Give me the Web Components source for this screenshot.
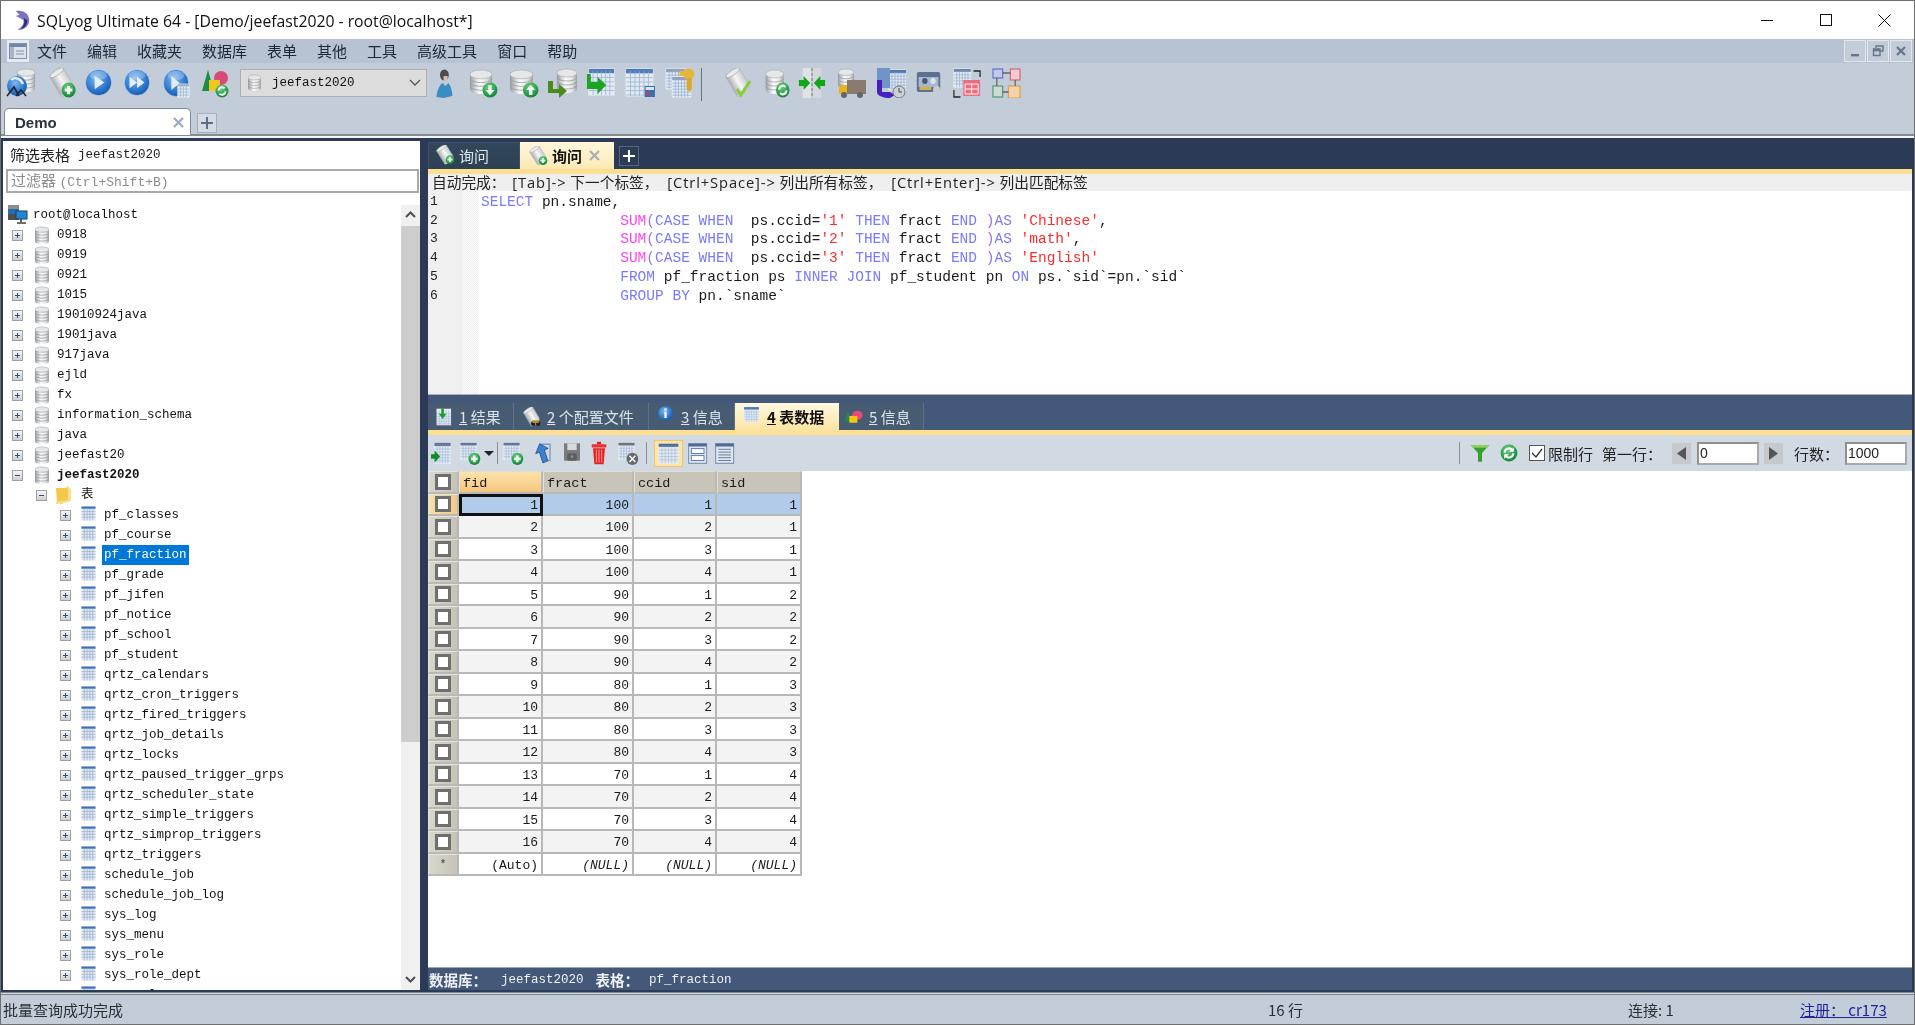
<!DOCTYPE html>
<html><head><meta charset="utf-8"><title>SQLyog</title>
<style>
html,body{margin:0;padding:0;overflow:hidden;background:#fff}
body{font-family:"Noto Sans CJK SC","Liberation Sans",sans-serif;font-size:14px;color:#222}
</style></head>
<body>
<sq-app></sq-app>
<script>
const MONO='"Liberation Mono","Noto Sans CJK SC",monospace';
const CJK='"Noto Sans CJK SC","Liberation Sans",sans-serif';
const DEFS=`<defs>
<linearGradient id="gy" x2="1" y2="0"><stop offset="0" stop-color="#9a9ea3"/><stop offset=".42" stop-color="#fbfbfb"/><stop offset=".75" stop-color="#e4e5e6"/><stop offset="1" stop-color="#a2a5aa"/></linearGradient>
<radialGradient id="bl" cx=".42" cy=".35" r=".72"><stop offset="0" stop-color="#7fb8ee"/><stop offset=".6" stop-color="#2f7ad0"/><stop offset="1" stop-color="#124f9f"/></radialGradient>
<radialGradient id="gn" cx=".42" cy=".3" r=".8"><stop offset="0" stop-color="#6fcf86"/><stop offset=".6" stop-color="#27a04a"/><stop offset="1" stop-color="#12743a"/></radialGradient>
<linearGradient id="pp" x2="1" y2="0"><stop offset="0" stop-color="#a9abad"/><stop offset=".5" stop-color="#f7f7f7"/><stop offset="1" stop-color="#c9cacc"/></linearGradient>
</defs>`;
function cyl(x,y,w,h){const ry=w*.2;let s=`<path d="M${x} ${y+ry}V${y+h-ry}A${w/2} ${ry} 0 0 0 ${x+w} ${y+h-ry}V${y+ry}Z" fill="url(#gy)"/><ellipse cx="${x+w/2}" cy="${y+ry}" rx="${w/2}" ry="${ry}" fill="#e6e7e8" stroke="#a2a5a9" stroke-width=".6"/>`;
 for(let i=1;i<4;i++){const yy=y+ry+(h-2*ry)*i/4;s+=`<path d="M${x} ${yy}A${w/2} ${ry} 0 0 0 ${x+w} ${yy}" fill="none" stroke="#8f9296" stroke-width=".7"/>`}return s}
function tbl(x,y,w,h,c='#4f7dba'){let s=`<rect x="${x}" y="${y}" width="${w}" height="${h}" fill="#e2e9f3" stroke="#eef2f6" stroke-width=".8"/><rect x="${x}" y="${y}" width="${w}" height="${Math.max(2.4,h*.16)}" fill="${c}"/>`;
 const st=Math.max(3,w/6);for(let a=x+st;a<x+w-1;a+=st)s+=`<path d="M${a} ${y+2}V${y+h}" stroke="#94add0" stroke-width=".7"/>`;for(let b=y+h*.16+st;b<y+h-1;b+=st)s+=`<path d="M${x} ${b}H${x+w}" stroke="#94add0" stroke-width=".7"/>`;return s}
function bad(cx,cy,r,t){let g='';const w='#f4fbf5';
 if(t=='+')g=`<path d="M${cx-r*.55} ${cy}H${cx+r*.55}M${cx} ${cy-r*.55}V${cy+r*.55}" stroke="${w}" stroke-width="${r*.42}"/>`;
 if(t=='d')g=`<path d="M${cx} ${cy+r*.7}L${cx-r*.6} ${cy}H${cx-r*.22}V${cy-r*.65}H${cx+r*.22}V${cy}H${cx+r*.6}Z" fill="${w}"/>`;
 if(t=='u')g=`<path d="M${cx} ${cy-r*.7}L${cx-r*.6} ${cy}H${cx-r*.22}V${cy+r*.65}H${cx+r*.22}V${cy}H${cx+r*.6}Z" fill="${w}"/>`;
 if(t=='r')g=`<path d="M${cx-r*.55} ${cy-r*.05}A${r*.55} ${r*.55} 0 0 1 ${cx+r*.4} ${cy-r*.4}M${cx+r*.55} ${cy+r*.05}A${r*.55} ${r*.55} 0 0 1 ${cx-r*.4} ${cy+r*.4}" stroke="${w}" stroke-width="${r*.3}" fill="none"/>`;
 return `<circle cx="${cx}" cy="${cy}" r="${r}" fill="url(#gn)"/>`+g}
function scroll(){return `<g transform="rotate(-32 14 13)"><path d="M5 3H22V20C22 24 20 26 17 26H5Z" fill="url(#pp)" stroke="#b0b2b5" stroke-width=".6"/><ellipse cx="13.5" cy="3" rx="8.5" ry="2.6" fill="#eaeaea" stroke="#9ea1a5" stroke-width=".7"/><ellipse cx="10.5" cy="25.5" rx="5.5" ry="2" fill="#c4c6c8"/></g>`}
function circ(g){return `<circle cx="15" cy="15" r="13.5" fill="url(#bl)" stroke="#dbe5f0" stroke-width=".6"/><ellipse cx="15" cy="7.5" rx="9" ry="4.6" fill="#fff" opacity=".26"/>`+g}
const ICONS={
 connect:`${cyl(11,1,18,23)}<circle cx="11" cy="18" r="10" fill="url(#bl)"/><path d="M5 12C9 8 15 11 17 16" stroke="#e8eef6" stroke-width="2.4" fill="none"/><path d="M1 28L8 19L13 28M10 28L15 22L20 28" fill="none" stroke="#20242c" stroke-width="1.6"/>`,
 qadd:`${scroll()}${bad(21,22,7.5,'+')}`,
 play:circ(`<path d="M11 8L21 15L11 22Z" fill="#e5edf6"/>`),
 ffwd:circ(`<path d="M7 9L15 15L7 21ZM15 9L23 15L15 21Z" fill="#e5edf6"/>`),
 playdoc:circ(`<path d="M10 8L19 15L10 22Z" fill="#e5edf6"/>`)+tbl(17,16,12,13,'#a6b5ca'),
 shapes:`<path d="M8 2L14 23H2Z" fill="#1d8f44"/><circle cx="21" cy="10" r="7" fill="#d94a78"/><rect x="9" y="12" width="11" height="11" fill="#f2c81e"/>${bad(22,23,6.5,'r')}`,
 user:`<circle cx="13" cy="7" r="5.5" fill="#4a4b4e"/><path d="M12 8h5v5h-5z" fill="#d8c0ae"/><path d="M3 29C4 21 8 16 11 15L14 18L18 15C21 18 23 23 23 28L12 30Z" fill="#3a8dc0"/>`,
 dbdown:`${cyl(2,2,22,24)}${bad(22,22,7.5,'d')}`,
 dbup:`${cyl(2,2,22,24)}${bad(22,22,7.5,'u')}`,
 dbarrow:`${cyl(10,1,20,24)}<path d="M1 13H6V21H12V16L20 23L12 30V25H1Z" fill="#4a8a1e"/>`,
 tblarrow:`${tbl(3,1,26,26)}<path d="M1 6H5V14H12V9L21 17L12 26V21H1Z" fill="#1aa522"/>`,
 tbldb:`${tbl(1,1,26,27)}<rect x="19" y="18" width="10" height="11" fill="#3f6eaf"/><rect x="20" y="19" width="8" height="3" fill="#dbe5f3"/><rect x="20" y="24" width="3" height="3" fill="#d04040"/>`,
 tblkey:`${tbl(1,1,18,20,'#90a2be')}${tbl(7,9,18,20,'#90a2be')}<circle cx="23" cy="6" r="5.5" fill="#e6b63c"/><rect x="14" y="3" width="6" height="5" fill="#e6b63c"/><path d="M21 10h5v11l-2 3-3-3z" fill="#dca72a"/>`,
 qcheck:`${scroll()}<path d="M13 21L17 27L27 13" fill="none" stroke="#88cc3c" stroke-width="3.2"/>`,
 dbref:`${cyl(3,2,20,24)}${bad(22,22,7.5,'r')}`,
 compare:`<rect x="5" y="0" width="9" height="30" fill="#dfe3e8"/><rect x="16" y="0" width="9" height="30" fill="#d4d8dd"/><path d="M15 0V30" stroke="#777" stroke-dasharray="3 2"/><path d="M1 12H6V8L13 15L6 22V18H1ZM29 12H24V8L17 15L24 22V18H29Z" fill="#11a518"/>`,
 truck:`${cyl(2,1,16,20)}<rect x="11" y="12" width="20" height="14" fill="#8a7a6e"/><path d="M3 17H11V26H3Z" fill="#e6b21e"/><circle cx="8" cy="27" r="3" fill="#666"/><circle cx="24" cy="27" r="3" fill="#666"/>`,
 sched:`${tbl(13,2,17,20,'#5478b0')}<rect x="1" y="0" width="13" height="20" fill="#7094c8"/><path d="M1 12V24C1 28 8 30 14 30L19 27L14 24H6V12Z" fill="#4820c0"/><circle cx="23" cy="24" r="6" fill="#ccd0d4" stroke="#777"/><path d="M23 20V24H26" stroke="#444" fill="none"/>`,
 idcard:`<rect x="2" y="4" width="26" height="20" rx="2" fill="#5d7090"/><rect x="4" y="9" width="22" height="10" fill="#a4b8d2"/><circle cx="11" cy="13" r="3" fill="#45566e"/><circle cx="20" cy="13" r="3" fill="#dfe3e9"/><rect x="5" y="19" width="13" height="3" fill="#dcb040"/><circle cx="24" cy="22" r="4" fill="#c8ccd2"/>`,
 tblcopy:`${tbl(1,1,18,18,'#6f88aa')}<rect x="11" y="12" width="18" height="16" fill="#f26a7e"/><path d="M13 16H27V26H13ZM20 16V26M13 21H27" stroke="#fff" fill="none"/><path d="M22 3H29V9M1 22V29H8" stroke="#222" stroke-width="1.3" fill="none"/>`,
 schema:`<g fill="none" stroke-width="1.3"><rect x="1" y="1" width="10" height="9" stroke="#6c74c8" fill="#c0c8ec"/><rect x="19" y="1" width="10" height="11" stroke="#d0707c" fill="#f3c9cd"/><rect x="1" y="18" width="10" height="11" stroke="#5c9c7c" fill="#c8dcd2"/><rect x="17" y="18" width="12" height="12" stroke="#e0a050" fill="#f3d4a8"/><path d="M11 5H19M5 10V18M24 12V18M11 24H17" stroke="#666"/></g>`,
 db:`${cyl(3,1,14,18)}`,
 folder:`<path d="M1 3H11L13 1V15L7 19H2Z" fill="#f2c94b"/><path d="M1 3V17H2L13 15V2L16 4V16L5 19H1Z" fill="#f9df8c"/>`,
 table:`${tbl(.5,.5,15,15,'#3f72b8')}`,
 server:`<rect x="1" y="0" width="11" height="4" fill="#8a8f96"/><rect x="1" y="4" width="11" height="5" fill="#2a6cb0"/><rect x="1" y="9" width="11" height="6" fill="#4d5156"/><rect x="9" y="6" width="11" height="8" fill="#1e88d8" stroke="#2a3c55"/><path d="M14 14v3M10 18H19" stroke="#3b4048" stroke-width="1.6"/>`,
 dolphin:`<path d="M3 1C9 0 16 2 17 9C18 15 13 20 5 20C9 17 12 14 11 10C8 9 6 7 3 6C5 5 6 5 7 5Z" fill="#7a74c0"/><path d="M11 8C13 11 12 16 8 19C13 18 15 14 15 10Z" fill="#2c2a7c"/>`,
 qplain:`${scroll()}${bad(21,22,6.5,'+')}`,
 result:`${tbl(3,3,22,24,'#e6edf5')}<path d="M14 2V10H18L12 18L6 10H10V2Z" fill="#18a02c"/>`,
 profile:`${scroll()}<circle cx="16" cy="25" r="3.5" fill="#222"/><circle cx="24" cy="25" r="3.5" fill="#222"/><rect x="15" y="20" width="10" height="4" fill="#b58a2c"/>`,
 info:`<circle cx="15" cy="15" r="13" fill="url(#bl)"/><rect x="13" y="6" width="4" height="4" fill="#fff"/><rect x="13" y="12" width="4" height="11" fill="#fff"/>`,
 tabledata:`${tbl(2,2,26,26,'#3f72b8')}`,
 shapes2:`<path d="M6 6L12 24H1Z" fill="#1d8f44"/><circle cx="20" cy="13" r="8" fill="#e8497a"/><rect x="8" y="14" width="12" height="12" fill="#f7c612"/>`,
 rowimport:`${tbl(5,1,23,27,'#5f7496')}<path d="M0 16H5V11L13 19L5 27V22H0Z" fill="#0c8e24"/>`,
 rowadd:`${tbl(2,1,22,22,'#5f7496')}${bad(21,22,8,'+')}`,
 undo:`<path d="M11 3H27V24H18" fill="none" stroke="#7e9ac2" stroke-width="2"/><path d="M16 2L6 12H12V27H20V12H26Z" transform="rotate(-20 15 15)" fill="#3e7fd0" stroke="#1c4f95"/>`,
 save:`<path d="M3 2H27V28H3Z" fill="#7a7c7f"/><rect x="8" y="2" width="14" height="10" fill="#d8d8d8"/><rect x="8" y="17" width="14" height="11" fill="#5c5e61"/><circle cx="15" cy="22" r="2" fill="#8a8c8f"/>`,
 trash:`<rect x="12" y="1" width="6" height="3" fill="#d22"/><rect x="4" y="4" width="22" height="4" rx="1" fill="#ee3030"/><path d="M6 9H24L22 29H8Z" fill="#e42525"/><path d="M11 11V27M15 11V27M19 11V27" stroke="#ff9a9a" stroke-width="1.4"/>`,
 rowdel:`${tbl(2,1,22,22,'#6d7178')}<circle cx="21" cy="22" r="8" fill="#66696e"/><path d="M17 18L25 26M25 18L17 26" stroke="#fff" stroke-width="2"/>`,
 viewgrid:`${tbl(1,1,28,28,'#4e6a94')}`,
 viewform:`<rect x="1" y="1" width="27" height="28" fill="#dfe6ef" stroke="#6c86ab" stroke-width="1.4"/><rect x="1" y="1" width="27" height="4" fill="#4e6a94"/><rect x="5" y="8" width="19" height="7" fill="#fff" stroke="#5c7aa5" stroke-width="1.4"/><rect x="5" y="18" width="19" height="7" fill="#fff" stroke="#5c7aa5" stroke-width="1.4"/>`,
 viewtext:`<rect x="1" y="1" width="27" height="28" fill="#dfe6ef" stroke="#6c86ab" stroke-width="1.4"/><rect x="1" y="1" width="27" height="4" fill="#4e6a94"/><path d="M5 9H24M5 13H24M5 17H24M5 21H24M5 25H24" stroke="#5c6f8c" stroke-width="1.3"/>`,
 funnel:`<path d="M1 3H29L18 15V28H12V15Z" fill="#36a02c"/><path d="M1 3H29L26 7H4Z" fill="#8bd05a"/>`,
 refresh:`<circle cx="15" cy="15" r="14" fill="url(#gn)"/><path d="M6 14A9 9 0 0 1 21 8L23 5V13H15L18 10A6 6 0 0 0 9 15ZM24 16A9 9 0 0 1 9 22L7 25V17H15L12 20A6 6 0 0 0 21 15Z" fill="#fff"/>`
};
const VB={db:'3 0 14 20',folder:'0 0 17 20',table:'0 0 16 16',server:'0 0 21 20',dolphin:'0 0 19 21'};
class SqIcon extends HTMLElement{
 constructor(){super();this.attachShadow({mode:'open'})}
 connectedCallback(){const n=this.getAttribute('name'),w=this.getAttribute('w')||30,h=this.getAttribute('h')||w;
  this.shadowRoot.innerHTML=`<style>:host{display:inline-flex;flex:none;width:${w}px;height:${h}px}svg{display:block;width:100%;height:100%}</style><svg viewBox="${VB[n]||'0 0 30 30'}" preserveAspectRatio="none" xmlns="http://www.w3.org/2000/svg">${DEFS}${ICONS[n]||''}</svg>`}
}
customElements.define('sq-icon',SqIcon);
function el(name,cssText,html){customElements.define(name,class extends HTMLElement{constructor(){super();this.attachShadow({mode:'open'}).innerHTML=`<style>${cssText}</style>${typeof html=='function'?html():html}`}})}

el('sq-titlebar',`:host{display:flex;align-items:center;height:38px;flex:none;background:#fff;border-top:1px solid #6e6e6e;font:15.75px "Open Sans","Liberation Sans",sans-serif;color:#111}
 sq-icon{margin-left:12px;margin-right:6px}
 .t{flex:1;white-space:pre;margin-top:1px}
 .b{width:59px;height:38px;display:flex;align-items:center;justify-content:center}
 svg{display:block}`,
 `<sq-icon name="dolphin" w="18" h="21"></sq-icon><div class="t">SQLyog Ultimate 64 - [Demo/jeefast2020 - root@localhost*]</div>
 <div class="b"><svg width="12" height="12"><path d="M0 6.5H12" stroke="#111"/></svg></div>
 <div class="b"><svg width="12" height="12"><rect x=".5" y=".5" width="11" height="11" fill="none" stroke="#111"/></svg></div>
 <div class="b"><svg width="13" height="13"><path d="M.5 .5L12.5 12.5M12.5 .5L.5 12.5" stroke="#111"/></svg></div>`);

el('sq-menubar',`:host{display:flex;align-items:center;height:24px;flex:none;background:#b7c3d3;font:15px ${CJK};color:#1f2733}
 .ic{width:22px;height:22px;background:#e6eaf0;margin:0 8px 0 6px;display:flex;align-items:center;justify-content:center}
 .m{margin-right:20px;line-height:24px}
 .sp{flex:1}
 .w{width:22px;height:22px;margin-right:1px;background:#c3cdd9;border:1px solid #e3e7ec;box-sizing:border-box;display:flex;align-items:center;justify-content:center}`,
 `<div class="ic"><svg width="18" height="16"><rect x=".5" y=".5" width="17" height="15" fill="#dde3ea" stroke="#7f93ad"/><rect x="1" y="1" width="16" height="3" fill="#6f88aa"/><rect x="1" y="4" width="4" height="11" fill="#a6b5c9"/><path d="M7 8H15M7 11H15" stroke="#7f93ad"/></svg></div>
 ${['文件','编辑','收藏夹','数据库','表单','其他','工具','高级工具','窗口','帮助'].map(s=>`<div class="m">${s}</div>`).join('')}
 <div class="sp"></div>
 <div class="w"><svg width="12" height="12"><rect x="2" y="9" width="8" height="2.4" fill="#66758c"/></svg></div>
 <div class="w"><svg width="12" height="12"><path d="M4 3V1H11V6H8M1.5 4H8V10.5H1.5ZM1.5 5.5H8" fill="none" stroke="#66758c" stroke-width="1.4"/></svg></div>
 <div class="w" style="margin-right:2px"><svg width="12" height="12"><path d="M2 2L10 10M10 2L2 10" stroke="#66758c" stroke-width="2.2"/></svg></div>`);

el('sq-combo',`:host{display:flex;align-items:center;width:187px;height:28px;flex:none;box-sizing:border-box;background:#dcdcdc;border:1px solid #adafb2;font:12.5px ${MONO};color:#111}
 sq-icon{margin:0 11px 0 7px}.t{flex:1}svg{margin-right:5px}`,
 `<sq-icon name="db" w="13" h="18"></sq-icon><div class="t">jeefast2020</div><svg width="12" height="8"><path d="M1 1L6 6L11 1" fill="none" stroke="#555" stroke-width="1.3"/></svg>`);

el('sq-toolbar',`:host{display:flex;align-items:flex-start;height:45px;flex:none;background:#c3cdd9;padding-top:5px;box-sizing:border-box}
 sq-icon,sq-combo{display:inline-flex}.s{width:1px;height:33px;background:#6b7380;flex:none}`,()=>{
 const items=[['connect',5,30,30],['qadd',48,28,30],['play',83,29,29],['ffwd',122,28,29],['playdoc',161,28,30],['shapes',199,30,30],['combo',239,187],['user',433,24,30],['dbdown',467,30,30],['dbup',507,31,30],['dbarrow',546,30,30],['tblarrow',585,29,30],['tbldb',624,31,30],['tblkey',664,31,30],['sep',700,1],['qcheck',724,28,30],['dbref',762,27,30],['compare',797,28,30],['truck',835,30,30],['sched',875,30,30],['idcard',914,27,30],['tblcopy',952,28,30],['schema',991,29,30]];
 let x=0,h='';for(const it of items){const m=it[1]-x;x=it[1]+it[2];
  if(it[0]=='combo')h+=`<sq-combo style="margin-left:${m}px;margin-top:1px"></sq-combo>`;
  else if(it[0]=='sep')h+=`<div class="s" style="margin-left:${m}px"></div>`;
  else h+=`<sq-icon name="${it[0]}" w="${it[2]}" h="${it[3]}" style="margin-left:${m}px"></sq-icon>`}
 return h});

el('sq-conn-tabs',`:host{display:flex;align-items:flex-end;height:30px;flex:none;background:linear-gradient(#c3cdd9 0 26px,#858b93 26px 28px,#f3f4f6 28px);box-sizing:border-box;padding:0 0 3px 3px}
 .tab{width:187px;height:27px;background:#fff;border:1px solid #7d8a9c;border-bottom:0;border-radius:5px 5px 0 0;box-sizing:border-box;display:flex;align-items:center;justify-content:space-between;padding:0 6px 0 10px;font:bold 15px "Liberation Sans",sans-serif;color:#2a3340}
 .p{width:20px;height:20px;background:#d4dbe4;border:1px solid #a4afbd;box-sizing:border-box;margin:0 0 2px 6px;display:flex;align-items:center;justify-content:center}`,
 `<div class="tab"><span>Demo</span><svg width="11" height="11"><path d="M1 1L10 10M10 1L1 10" stroke="#9fadc0" stroke-width="2.4"/></svg></div><div class="p"><svg width="12" height="12"><path d="M6 0V12M0 6H12" stroke="#5b6c84" stroke-width="2"/></svg></div>`);

el('sq-tree',`:host{display:flex;flex-direction:column;width:417px;flex:none;background:#fff;margin-top:3px;font:12.5px ${MONO};color:#111;min-height:0}
 .h{height:26px;padding:1px 0 0 7px;display:flex;align-items:center;font:15px ${CJK};color:#222;flex:none;box-sizing:border-box}
 .h b{font:12.5px ${MONO};margin-left:8px}
 .f{height:24px;margin:2px 1px 0 3px;border:2px solid #a9a9a9;box-sizing:border-box;font:15px/17px ${CJK};color:#8c8c8c;padding-left:3px;flex:none;white-space:pre}
 .f span{font:13px ${MONO}}
 .b{flex:1;display:flex;min-height:0;margin-top:12px;overflow:hidden}
 .l{flex:1;overflow:hidden}
 .r{display:flex;align-items:center;height:20px;white-space:pre}
 .exp{width:11px;height:11px;flex:none;background:linear-gradient(#f6f6f6,#cfcfcf);border:1px solid #a0a0a0;box-sizing:border-box;margin-top:1px;position:relative}
 .exp svg{position:absolute;left:0;top:0}
 .t.sel{background:#0078d7;color:#fff;padding:1px 2px}
 .t{line-height:18px}
 .sb{width:19px;flex:none;background:#f0f0f0;display:flex;flex-direction:column;margin-top:-1px}
 .sb .a{height:22px;display:flex;align-items:center;justify-content:center;flex:none}
 .sb .th{height:516px;background:#cdcdcd;flex:none}.sb .sp{flex:1}`,()=>{
 const exp=(o)=>`<span class="exp"><svg width="9" height="9"><path d="M2 4.5H7${o?'':'M4.5 2V7'}" stroke="#2f4f8f" stroke-width="1"/></svg></span>`;
 const db=(n,b,o)=>`<div class="r" style="padding-left:9px">${exp(o)}<sq-icon name="db" w="14" h="19" style="margin:0 8px 0 12px"></sq-icon><span class="t" ${b?'style="font-weight:bold"':''} >${n}</span></div>`;
 const tb=(n,s)=>`<div class="r" style="padding-left:57px">${exp()}<sq-icon name="table" w="15" h="15" style="margin:-3px 8px 0 10px"></sq-icon><span class="t${s?' sel':''}" style="margin-left:${s?-2:0}px">${n}</span></div>`;
 let rows=`<div class="r" style="padding-left:4px"><sq-icon name="server" w="21" h="20"></sq-icon><span class="t" style="margin-left:5px">root@localhost</span></div>`;
 rows+=['0918','0919','0921','1015','19010924java','1901java','917java','ejld','fx','information_schema','java','jeefast20'].map(n=>db(n)).join('');
 rows+=db('jeefast2020',1,1);
 rows+=`<div class="r" style="padding-left:33px">${exp(1)}<sq-icon name="folder" w="17" h="20" style="margin:0 9px 0 8px"></sq-icon><span class="t" style="font:15px ${CJK}">表</span></div>`;
 rows+=['pf_classes','pf_course','pf_fraction','pf_grade','pf_jifen','pf_notice','pf_school','pf_student','qrtz_calendars','qrtz_cron_triggers','qrtz_fired_triggers','qrtz_job_details','qrtz_locks','qrtz_paused_trigger_grps','qrtz_scheduler_state','qrtz_simple_triggers','qrtz_simprop_triggers','qrtz_triggers','schedule_job','schedule_job_log','sys_log','sys_menu','sys_role','sys_role_dept','sys_role_menu'].map(n=>tb(n,n=='pf_fraction')).join('');
 return `<div class="h">筛选表格<b>jeefast2020</b></div><div class="f">过滤器 <span>(Ctrl+Shift+B)</span></div>
 <div class="b"><div class="l">${rows}</div><div class="sb"><div class="a"><svg width="11" height="8"><path d="M1 6L5.5 1.5L10 6" fill="none" stroke="#505050" stroke-width="2"/></svg></div><div class="th"></div><div class="sp"></div><div class="a"><svg width="11" height="8"><path d="M1 2L5.5 6.5L10 2" fill="none" stroke="#505050" stroke-width="2"/></svg></div></div></div>`});

el('sq-query-tabs',`:host{display:flex;align-items:flex-end;height:31px;flex:none;background:#2b3a55;font:15px ${CJK};color:#dfe5ec}
 .t{height:27px;display:flex;align-items:center;box-sizing:border-box;flex:none}
 .a{width:92px;padding:0 0 2px 7px;background:linear-gradient(#33475a,#2d4155);border:1px solid #3f5168;border-bottom:0}
 .b{width:94px;padding-left:9px;background:linear-gradient(#fff7dd,#fde9b4);color:#111;font-weight:bold;justify-content:flex-start}
 sq-icon{margin-right:3px}
 svg{margin-left:7px}
 .p{width:20px;height:20px;margin:0 0 3px 5px;background:#2b3a55;border:1px solid #54657f;box-sizing:border-box;display:flex;align-items:center;justify-content:center}
 .p svg{margin:0}`,
 `<div class="t a"><sq-icon name="qplain" w="20" h="20"></sq-icon>询问</div><div class="t b"><sq-icon name="qplain" w="20" h="20"></sq-icon>询问<svg width="11" height="11"><path d="M1 1L10 10M10 1L1 10" stroke="#a9aeb5" stroke-width="2.2"/></svg></div><div class="p"><svg width="12" height="12"><path d="M6 0V12M0 6H12" stroke="#fff" stroke-width="2"/></svg></div>`);

el('sq-autobar',`:host{display:block;flex:none;border-top:5px solid #fcdf90;height:17px;background:#efefef;font:14.7px/17px "Open Sans","Noto Sans CJK SC",sans-serif;color:#222;padding-left:4px;white-space:pre;overflow:hidden}
 span{letter-spacing:.9px;margin-left:5px}span.a{margin-left:3px}`,
 `自动完成： <span class="a">[Tab]-&gt;</span> 下一个标签， <span>[Ctrl+Space]-&gt;</span> 列出所有标签， <span>[Ctrl+Enter]-&gt;</span> 列出匹配标签`);

el('sq-editor',`:host{display:flex;height:204px;flex:none;background:#fff;font:14.5px/18.7px ${MONO};color:#1a1a1a;overflow:hidden;border-bottom:1px solid #a8b0bc;box-sizing:border-box}
 .g{width:34px;background:#f0f0f0;padding:2px 0 0 2px;box-sizing:border-box;font-size:13px;color:#222;flex:none}
 .h{width:17px;flex:none;background:repeating-conic-gradient(#ececec 0 25%,#fff 0 50%) 0 0/2px 2px}
 .c{padding:2px 0 0 2px}
 .c div{white-space:pre}.c .in{padding-left:16ch}
 .k{color:#7a7aff}.f{color:#ff45ea}.p{color:#9b72e8}.s{color:#ff2a2a}`,()=>{
 const sum=(n,a,e)=>`<div class="in"><span class="f">SUM</span><span class="p">(</span><span class="k">CASE WHEN</span>  ps.ccid=<span class="s">'${n}'</span> <span class="k">THEN</span> fract <span class="k">END</span> <span class="p">)</span><span class="k">AS</span> <span class="s">'${a}'</span>${e}</div>`;
 return `<div class="g">1<br>2<br>3<br>4<br>5<br>6</div><div class="h"></div><div class="c"><div><span class="k">SELECT</span> pn.sname,</div>${sum(1,'Chinese',',')}${sum(2,'math',',')}${sum(3,'English','')}<div class="in"><span class="k">FROM</span> pf_fraction ps <span class="k">INNER JOIN</span> pf_student pn <span class="k">ON</span> ps.\`sid\`=pn.\`sid\`</div><div class="in"><span class="k">GROUP BY</span> pn.\`sname\`</div></div>`});

el('sq-result-tabs',`:host{display:flex;align-items:flex-end;height:35px;flex:none;background:#44597a;font:15px ${CJK};color:#dde3ea}
 .t{height:27px;display:flex;align-items:center;box-sizing:border-box;flex:none;background:#475c72;border-right:1px solid #5f7186;padding-left:7px;white-space:pre}
 .on{height:32px;margin-bottom:-5px;position:relative;background:linear-gradient(#fff8e2,#fde7ad 70%,#fcdf90);color:#111;font-weight:bold;border:0;padding-bottom:5px}
 u{margin-left:5px}sq-icon{margin-right:0}`,
 `<div class="t" style="width:86px"><sq-icon name="result" w="19" h="20"></sq-icon><u>1</u> 结果</div>
 <div class="t" style="width:135px;padding-left:9px"><sq-icon name="profile" w="19" h="20"></sq-icon><u>2</u> 个配置文件</div>
 <div class="t" style="width:86px;padding-left:8px"><sq-icon name="info" w="17" h="17" style="margin-top:-6px"></sq-icon><u style="margin-left:7px">3</u> 信息</div>
 <div class="t on" style="width:104px;padding-left:8px"><sq-icon name="tabledata" w="17" h="17" style="margin-top:-4px"></sq-icon><u style="margin-left:7px">4</u> 表数据</div>
 <div class="t" style="width:85px;padding-left:5px"><sq-icon name="shapes2" w="20" h="17"></sq-icon><u>5</u> 信息</div>`);

el('sq-grid-toolbar',`:host{display:flex;align-items:center;height:36px;flex:none;background:#d1d9e3;border-top:5px solid #fcdf90;font:15px ${CJK};color:#222;white-space:pre}
 .s{width:1px;height:22px;background:#8a8f98;flex:none}
 .on{display:flex;align-items:center;justify-content:center;width:29px;height:27px;background:#ffe5a5;border:1px solid #f1c66a;box-sizing:border-box;flex:none;margin-left:7px}
 .sp{flex:1}
 .cb{width:16px;height:16px;background:#fff;border:1px solid #555;box-sizing:border-box;flex:none;display:flex}
 .n{width:19px;height:21px;background:#c6c8cb;display:flex;align-items:center;justify-content:center;flex:none}
 .i{height:23px;width:62px;box-sizing:border-box;background:#fff;border:2px solid #8f8f8f;border-right-color:#aaa;border-bottom-color:#aaa;font:14px/19px "Liberation Sans",sans-serif;padding-left:1px;color:#222;flex:none}`,
 `<sq-icon name="rowimport" w="21" h="23" style="margin-left:3px"></sq-icon><sq-icon name="rowadd" w="22" h="23" style="margin-left:7px"></sq-icon><svg width="10" height="5" style="margin-left:3px;flex:none"><path d="M0 0H10L5 5Z" fill="#222"/></svg><div class="s" style="margin-left:3px"></div>
 <sq-icon name="rowadd" w="22" h="23" style="margin-left:4px"></sq-icon><sq-icon name="undo" w="20" h="23" style="margin-left:8px"></sq-icon><sq-icon name="save" w="20" h="20" style="margin-left:10px;margin-top:-3px"></sq-icon><sq-icon name="trash" w="20" h="24" style="margin-left:7px"></sq-icon><sq-icon name="rowdel" w="22" h="23" style="margin-left:8px"></sq-icon><div class="s" style="margin-left:7px"></div>
 <div class="on"><sq-icon name="viewgrid" w="21" h="21"></sq-icon></div><sq-icon name="viewform" w="20" h="21" style="margin-left:5px"></sq-icon><sq-icon name="viewtext" w="20" h="21" style="margin-left:7px"></sq-icon>
 <div class="sp"></div><div class="s"></div>
 <sq-icon name="funnel" w="20" h="20" style="margin-left:10px"></sq-icon><sq-icon name="refresh" w="18" h="18" style="margin-left:10px"></sq-icon>
 <div class="cb" style="margin-left:11px"><svg width="14" height="14"><path d="M2 7L6 11L12 3" fill="none" stroke="#333" stroke-width="1.3"/></svg></div><span style="margin-left:3px">限制行</span><span style="margin-left:9px">第一行：</span>
 <div class="n" style="margin-left:10px"><svg width="9" height="13"><path d="M9 0V13L0 6.5Z" fill="#555"/></svg></div><div class="i" style="margin-left:6px">0</div><div class="n" style="margin-left:5px"><svg width="9" height="13"><path d="M0 0V13L9 6.5Z" fill="#555"/></svg></div>
 <span style="margin-left:11px">行数：</span><div class="i" style="margin:0 5px 0 6px;width:62px">1000</div>`);

el('sq-grid',`:host{display:block;flex:1;min-height:0;background:#fff;font:13px ${MONO};color:#1a1a1a}
 .g{display:grid;grid-template-columns:31px 84px 91px 83px 85px;grid-auto-rows:22.5px;width:374px}
 .c{box-sizing:border-box;border-right:2px solid #b8b8b8;border-bottom:2px solid #b8b8b8;display:flex;align-items:center;justify-content:flex-end;padding:3px 3px 0 0;overflow:hidden}
 .alt{background:#f3f3f3}.sel{background:#b3cbea}
 .hd{justify-content:flex-start;padding:3px 0 0 3px;background:#c8c5b8;font-size:13.5px;border-top:1px solid #dfddd4;border-left:1px solid #e2e0d8}
 .hdon{background:linear-gradient(#fbe3ab,#f6c67d)}
 .cur{outline:3px solid #111;outline-offset:-3px;border-color:transparent}
 .gu{justify-content:center;padding:0;background:linear-gradient(90deg,#d9d7cc,#c6c3b6);border-left:1px solid #e6e5dd;border-top:1px solid #e6e5dd}
 .guon{background:linear-gradient(90deg,#f9e0a6,#f4c987)}
 .box{background:#fff;border:3px solid #6f6f6f;display:block;width:10px;height:10px}
 i{font-style:italic}.st{font-size:10px;color:#555;font-weight:bold}`,()=>{
 let h=`<div class="c gu"><span class="box"></span></div><div class="c hd hdon">fid</div><div class="c hd">fract</div><div class="c hd">ccid</div><div class="c hd">sid</div>`;
 for(let i=1;i<=16;i++){const f=i<=4?100:i<=8?90:i<=12?80:70,cc=(i-1)%4+1,s=Math.ceil(i/4);
  const cl=i==1?'sel':(i%2==0?'alt':'');
  h+=`<div class="c gu ${i==1?'guon':''}"><span class="box"></span></div><div class="c ${i==1?'sel cur':cl}">${i}</div><div class="c ${cl}">${f}</div><div class="c ${cl}">${cc}</div><div class="c ${cl}">${s}</div>`}
 h+=`<div class="c gu"><span class="st">*</span></div><div class="c">(Auto)</div><div class="c"><i>(NULL)</i></div><div class="c"><i>(NULL)</i></div><div class="c"><i>(NULL)</i></div>`;
 return `<div class="g">${h}</div>`});

el('sq-infobar',`:host{display:flex;align-items:center;height:23px;flex:none;background:#44597a;color:#eef1f5;padding:1px 0 0 1px;white-space:pre;font:12.5px ${MONO};border-top:1px solid #9aa4b2;box-sizing:border-box}
 b{font:bold 14.5px ${CJK}}`,`<b>数据库：</b><span style="margin-left:14px">jeefast2020</span><b style="margin-left:12px">表格：</b><span style="margin-left:10px">pf_fraction</span>`);

el('sq-statusbar',`:host{display:flex;align-items:center;height:35px;flex:none;background:linear-gradient(#2b3a55 0 2px,#7f8790 2px 3px,#d5d9df 3px 4px,#7d8590 4px 5px,#c3cdd9 5px);border-bottom:1px solid #6e6e6e;box-sizing:border-box;padding-top:5px;font:15px ${CJK};color:#2a2f36;white-space:pre}
 a{color:#22229e;text-decoration:underline}`,
 `<span style="margin-left:2px;width:1265px">批量查询成功完成</span><span style="width:360px">16 行</span><span style="width:172px">连接: 1</span><a>注册： cr173</a>`);

el('sq-app',`:host{display:flex;flex-direction:column;width:1915px;height:1025px;overflow:hidden;background:#2b3a55;box-sizing:border-box;border-left:1px solid #6e6e6e;border-right:1px solid #6e6e6e;filter:blur(.35px)}
 .w{flex:1;display:flex;min-height:0;padding-left:2px}
 .r{flex:1;display:flex;flex-direction:column;min-width:0;margin:0 2px 0 8px}`,
 `<sq-titlebar></sq-titlebar><sq-menubar></sq-menubar><sq-toolbar></sq-toolbar><sq-conn-tabs></sq-conn-tabs>
 <div class="w"><sq-tree></sq-tree><div class="r"><sq-query-tabs></sq-query-tabs><sq-autobar></sq-autobar><sq-editor></sq-editor><sq-result-tabs></sq-result-tabs><sq-grid-toolbar></sq-grid-toolbar><sq-grid></sq-grid><sq-infobar></sq-infobar></div></div>
 <sq-statusbar></sq-statusbar>`);
</script>
</body></html>
